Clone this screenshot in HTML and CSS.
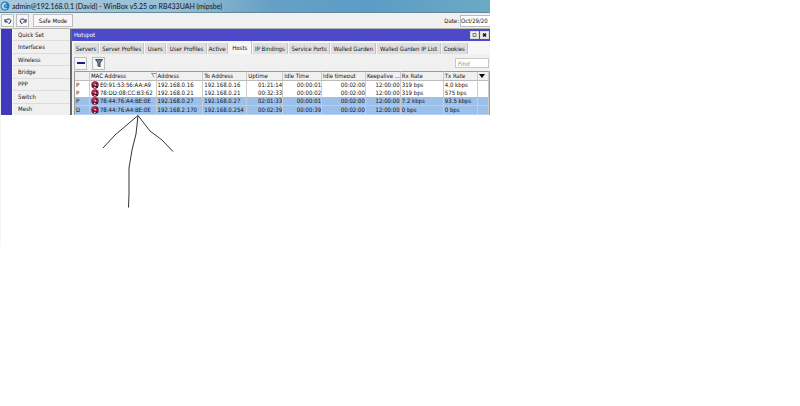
FILE: index.html
```html
<!DOCTYPE html>
<html lang="en">
<head>
<meta charset="utf-8">
<title>WinBox</title>
<link rel="stylesheet" href="styles.css">
</head>
<body>
<svg class="defs" aria-hidden="true">
  <symbol id="host" viewBox="0 0 8 8"><circle cx="4" cy="4" r="3.7" fill="#7d173b"/><path d="M1 2.5Q3 0 5 1L4 3L2 4ZM5 3L7 4L6 6Z" fill="#d12f4e"/><path d="M3.500 3h1.500v1.500H3.500zM3 6h1.500v1H3z" fill="#f4cfca"/><path d="M5 5h2v2H5z" fill="#352136"/></symbol>
</svg>
<main class="window">
  <header class="titlebar">
    <svg class="logo" viewBox="0 0 10 10"><circle cx="5" cy="5" r="4.5" fill="#2776b8"/><path d="M2 3Q5 0 7 3Q3 3 4 6Q5 8 8 7Q5 10 2 7Q1 5 2 3Z" fill="#a9dbf3"/><circle cx="6" cy="5" r="1.3" fill="#5aa8da"/></svg>
    <span>admin@192.168.0.1 (David) - WinBox v5.25 on RB433UAH (mipsbe)</span>
  </header>
  <div class="toolbar">
    <button class="btn" aria-label="Undo"><svg viewBox="0 0 8 8"><path d="M1 2v3h3M1.300 4.500Q3 1 5.500 2T6 6L4.500 6.500"/></svg></button>
    <button class="btn" aria-label="Redo"><svg viewBox="0 0 8 8"><path d="M7 2v3H4M6.700 4.500Q5 1 2.500 2T2 6L3.500 6.500"/></svg></button>
    <button class="btn safe">Safe Mode</button>
    <label class="date-label" for="date">Date:</label>
    <input class="date" id="date" value="Oct/29/20">
  </div>
  <div class="workspace">
    <div class="stripe"></div>
    <nav class="menu">
      <a href="#">Quick Set</a><a href="#">Interfaces</a><a href="#">Wireless</a><a href="#">Bridge</a><a href="#">PPP</a><a href="#">Switch</a><a href="#">Mesh</a>
    </nav>
    <section class="panel">
      <header class="panel-title">
        <h1>Hotspot</h1>
        <button class="ctl" aria-label="Maximize"><svg viewBox="0 0 8 8"><path d="M2 2h4v4H2z"/></svg></button>
        <button class="ctl" aria-label="Close"><svg viewBox="0 0 8 8"><path class="bold" d="M2 2l4 4M6 2L2 6"/></svg></button>
      </header>
      <div class="tabs" role="tablist">
        <button role="tab">Servers</button><button role="tab">Server Profiles</button><button role="tab">Users</button><button role="tab">User Profiles</button><button role="tab">Active</button><button role="tab" aria-selected="true">Hosts</button><button role="tab">IP Bindings</button><button role="tab">Service Ports</button><button role="tab">Walled Garden</button><button role="tab">Walled Garden IP List</button><button role="tab">Cookies</button>
      </div>
      <div class="actions">
        <button class="btn" aria-label="Remove"><svg viewBox="0 0 8 8"><path class="minus" d="M0 4h8"/></svg></button>
        <button class="btn" aria-label="Filter"><svg viewBox="0 0 8 8"><path class="funnel" d="M0.500 0.500h7L5 4v4L3 7V4Z"/></svg></button>
        <input class="find" aria-label="Find" placeholder="Find">
      </div>
      <table>
        <colgroup><col class="c-flag"><col class="c-mac"><col class="c-addr"><col class="c-to"><col class="c-up"><col class="c-idle"><col class="c-timeout"><col class="c-keep"><col class="c-rx"><col class="c-tx"><col class="c-more"></colgroup>
        <thead><tr><th></th><th>MAC Address<svg class="sort" viewBox="0 0 5 5"><path d="M0 .5h5M1 .5l2 4"/></svg></th><th>Address</th><th>To Address</th><th>Uptime</th><th>Idle Time</th><th>Idle timeout</th><th>Keepalive ...</th><th>Rx Rate</th><th>Tx Rate</th><th><svg class="more" viewBox="0 0 6 4"><path d="M0 0h6L3 4Z"/></svg></th></tr></thead>
        <tbody>
          <tr><td>P</td><td><svg class="host"><use href="#host"/></svg>E0:91:53:56:AA:A9</td><td>192.168.0.16</td><td>192.168.0.16</td><td class="num">01:21:14</td><td class="num">00:00:01</td><td class="num">00:02:00</td><td class="num">12:00:00</td><td>319 bps</td><td>4.0 kbps</td><td></td></tr>
          <tr><td>P</td><td><svg class="host"><use href="#host"/></svg>78:DD:08:CC:B3:62</td><td>192.168.0.21</td><td>192.168.0.21</td><td class="num">00:32:33</td><td class="num">00:00:02</td><td class="num">00:02:00</td><td class="num">12:00:00</td><td>319 bps</td><td>575 bps</td><td></td></tr>
          <tr class="selected"><td>P</td><td><svg class="host"><use href="#host"/></svg>78:44:76:A4:BE:0E</td><td>192.168.0.27</td><td>192.168.0.27</td><td class="num">02:01:33</td><td class="num">00:00:01</td><td class="num">00:02:00</td><td class="num">12:00:00</td><td>7.2 kbps</td><td>93.5 kbps</td><td></td></tr>
          <tr class="selected"><td>D</td><td><svg class="host"><use href="#host"/></svg>78:44:76:A4:BE:0E</td><td>192.168.2.170</td><td>192.168.0.254</td><td class="num">00:02:39</td><td class="num">00:00:39</td><td class="num">00:02:00</td><td class="num">12:00:00</td><td>0 bps</td><td>0 bps</td><td></td></tr>
        </tbody>
      </table>
    </section>
  </div>
</main>
<div class="note">
  <svg class="arrow" viewBox="0 0 80 100"><path d="M2 33L14 20L37 .5L49 16L61 25L72 36.500M37 .5L35 19L31 35L28 53V79L27.500 92.500"/></svg>
</div>
</body>
</html>
```

FILE: styles.css
```css
* { box-sizing: border-box; }
body {
  margin: 0;
  background: #fff;
  color: #111;
  font: 6px/8px "DejaVu Sans Condensed", "Liberation Sans", sans-serif;
}
button, input { font: inherit; color: inherit; margin: 0; padding: 0; border-radius: 0; }
svg { display: block; flex: none; }
.defs { position: absolute; width: 0; height: 0; }
.window { width: 61.25%; overflow: hidden; background: #f0f0f0; }
.titlebar {
  display: flex;
  align-items: center;
  gap: 2px;
  height: 13px;
  border-bottom: 1px solid #64889e;
  background: linear-gradient(90deg, #a7c9dc 0%, #98bfd5 35%, #67a0c5 55%, #5b9cc6 75%, #6ba9c4 100%);
  font-family: Lato, sans-serif;
  font-size: 7px;
  white-space: nowrap;
}
.logo { width: 10px; height: 10px; }
.toolbar {
  display: flex;
  align-items: center;
  gap: 2px;
  height: 15px;
  padding-left: 1px;
}
.btn {
  display: flex;
  align-items: center;
  justify-content: center;
  width: 13px;
  height: 13px;
  border: 1px solid #bdbdbd;
  background: #f7f7f7;
}
.btn svg { width: 8px; height: 8px; fill: none; stroke: #24285e; }
.btn .minus { stroke: #161e80; stroke-width: 2; }
.btn .funnel { fill: #777f91; stroke: #41485c; }
.safe { width: 40px; margin-left: 2px; }
.date-label { margin-left: auto; }
.date { flex: none; width: 30px; height: 12px; margin-left: -1px; border: 1px solid #bbb; border-right: 0; background: #fff; }
.workspace { display: flex; border-top: 1px solid #b5b5b5; }
.stripe { flex: none; width: 13px; border-left: 1px solid #eee; border-right: 1px solid #f8f8f8; background: #4038bd; }
.menu { display: flex; flex-direction: column; flex: none; width: 57px; }
.menu a {
  display: flex;
  flex: 1;
  align-items: center;
  padding-left: 5px;
  border-bottom: 1px solid #dcdcdc;
  color: inherit;
  text-decoration: none;
}
.menu a:last-child { border-bottom: 0; }
.panel { flex: 1; min-width: 0; padding-left: 2px; border-left: 2px solid #67676f; }
.panel-title { display: flex; align-items: center; gap: 1px; height: 12px; margin-left: -2px; padding: 0 1px 0 2px; background: #4d4aca; color: #fff; }
.panel-title h1 { margin: 0 auto 0 0; font: inherit; }
.ctl { width: 9px; height: 8px; border: 1px solid #ddd; background: #eee; }
.ctl svg { width: 7px; height: 6px; fill: none; stroke: #555; }
.ctl .bold { stroke: #111; stroke-width: 2; }
.tabs {
  display: grid;
  grid-template-columns: 26fr 45fr 22fr 40fr 21fr 24fr 36fr 42fr 46fr 64fr 27fr 21fr;
  height: 13px;
  margin-left: -2px;
  padding: 2px 0 0 2px;
  background: #f6f6f6;
}
.tabs button { min-width: 0; margin-right: 1px; border: 0; border-right: 1px solid #c4c4c4; background: #dedede; white-space: nowrap; }
.tabs [aria-selected] { margin-top: -2px; background: #f6f6f6; }
.actions { display: flex; align-items: center; gap: 5px; height: 17px; padding-top: 1px; }
.find { width: 34px; height: 10px; margin: 0 1px 0 auto; padding-left: 2px; border: 1px solid #c8c8c8; background: #fff; font-style: italic; }
.find::placeholder { color: #888; opacity: 1; }
table { width: 100%; table-layout: fixed; border-collapse: separate; border-spacing: 0; background: #fff; border-left: 1px solid #999; border-right: 1px solid #999; }
.c-flag { width: 3.6%; }
.c-mac { width: 16.1%; }
.c-addr { width: 11.3%; }
.c-to { width: 10.6%; }
.c-up { width: 8.7%; }
.c-idle { width: 9.4%; }
.c-timeout { width: 10.6%; }
.c-keep { width: 8.4%; }
.c-rx { width: 10.4%; }
.c-tx { width: 8.2%; }
.c-more { width: 2.7%; }
th, td { height: 8px; padding: 0 0 0 1px; border-right: 1px solid #ccc; font-weight: 400; text-align: left; white-space: nowrap; overflow: hidden; }
th { height: 10px; border-top: 1px solid #999; border-bottom: 1px solid #bbb; background: #f0f0f0; }
.num { text-align: right; }
.selected td { height: 9px; border-bottom: 1px solid #b7d0ef; background: #9dc0ea; }
.host { float: left; width: 8px; height: 8px; margin-right: 1px; }
.sort { float: right; width: 5px; height: 5px; margin-top: 1px; fill: none; stroke: #999; }
.more { width: 6px; height: 4px; }
.note { height: 131px; padding-left: 100px; border-left: 1px solid #f6f6f6; }
.arrow { width: 80px; height: 100px; fill: none; stroke: #333; stroke-width: 1; }
```
